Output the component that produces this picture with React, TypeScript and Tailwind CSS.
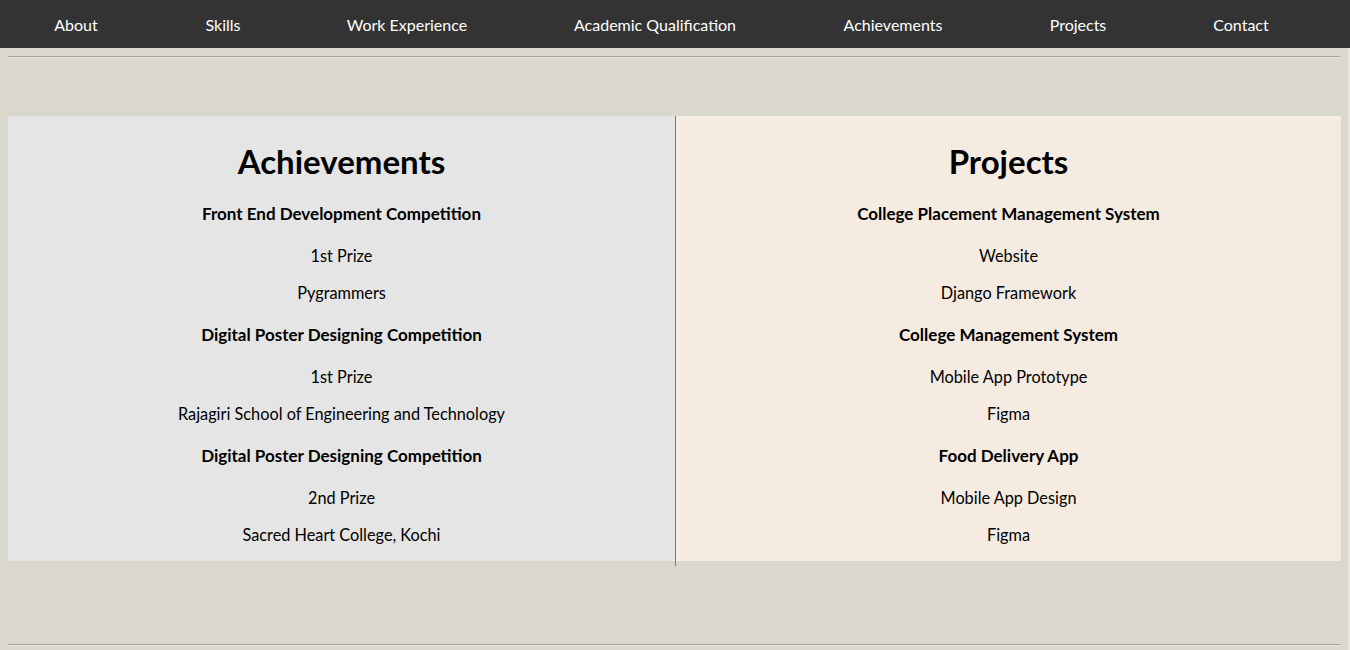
const NAV = [
  { label: 'About', w: 'w-[152px]' },
  { label: 'Skills', w: 'w-[142px]' },
  { label: 'Work Experience', w: 'w-[226px]' },
  { label: 'Academic Qualification', w: 'w-[270px]' },
  { label: 'Achievements', w: 'w-[206px]' },
  { label: 'Projects', w: 'w-[164px]' },
  { label: 'Contact', w: 'w-[162px]' },
]

const ACHIEVEMENTS = [
  { title: 'Front End Development Competition', lines: ['1st Prize', 'Pygrammers'] },
  { title: 'Digital Poster Designing Competition', lines: ['1st Prize', 'Rajagiri School of Engineering and Technology'] },
  { title: 'Digital Poster Designing Competition', lines: ['2nd Prize', 'Sacred Heart College, Kochi'] },
]

const PROJECTS = [
  { title: 'College Placement Management System', lines: ['Website', 'Django Framework'] },
  { title: 'College Management System', lines: ['Mobile App Prototype', 'Figma'] },
  { title: 'Food Delivery App', lines: ['Mobile App Design', 'Figma'] },
]

type Item = { title: string; lines: string[] }

function Panel({ heading, items, bg, w }: { heading: string; items: Item[]; bg: string; w: string }) {
  return (
    <div className={`${w} h-[445px] pt-[25px] pb-4 text-center text-black ${bg}`}>
      <h1 className="h-10 text-[33px] leading-10 font-bold">{heading}</h1>
      <div className="mt-[23px] flex flex-col gap-[22px]">
        {items.map((it, i) => (
          <div key={i} className="flex flex-col">
            <h4 className="h-5 text-[17px] leading-5 font-bold">{it.title}</h4>
            <p className="mt-[22px] h-5 text-[16.3px] leading-5">{it.lines[0]}</p>
            <p className="mt-[17px] h-5 text-[16.3px] leading-5">{it.lines[1]}</p>
          </div>
        ))}
      </div>
    </div>
  )
}

export default function App() {
  return (
    <div className="min-h-[650px] w-[1350px] bg-[#dad8cc]" style={{ fontFamily: 'Lato, "Noto Sans", sans-serif' }}>
      <nav className="flex h-12 items-center bg-[#333333] pt-[2px]">
        {NAV.map(n => (
          <a key={n.label} className={`${n.w} text-center text-[16px] text-white`}>{n.label}</a>
        ))}
      </nav>

      <div className="border-r-2 border-[#e4e3dd] pl-2 pr-[7px] h-[602px] flex flex-col">
        <hr className="mt-2 mr-px border-t border-b border-t-[#a5a49e] border-b-[#e6e5e0]" />

        <div className="mt-[58px] flex items-start">
          <Panel heading="Achievements" items={ACHIEVEMENTS} bg="bg-[#e5e5e5]" w="w-[667px]" />
          <div className="w-px h-[450px] bg-[#7b7b7b]" />
          <Panel heading="Projects" items={PROJECTS} bg="bg-[#f5ebe0]" w="flex-1" />
        </div>

        <hr className="mt-[78px] mr-px border-t border-b border-t-[#a5a49e] border-b-[#e6e5e0]" />
      </div>
    </div>
  )
}
